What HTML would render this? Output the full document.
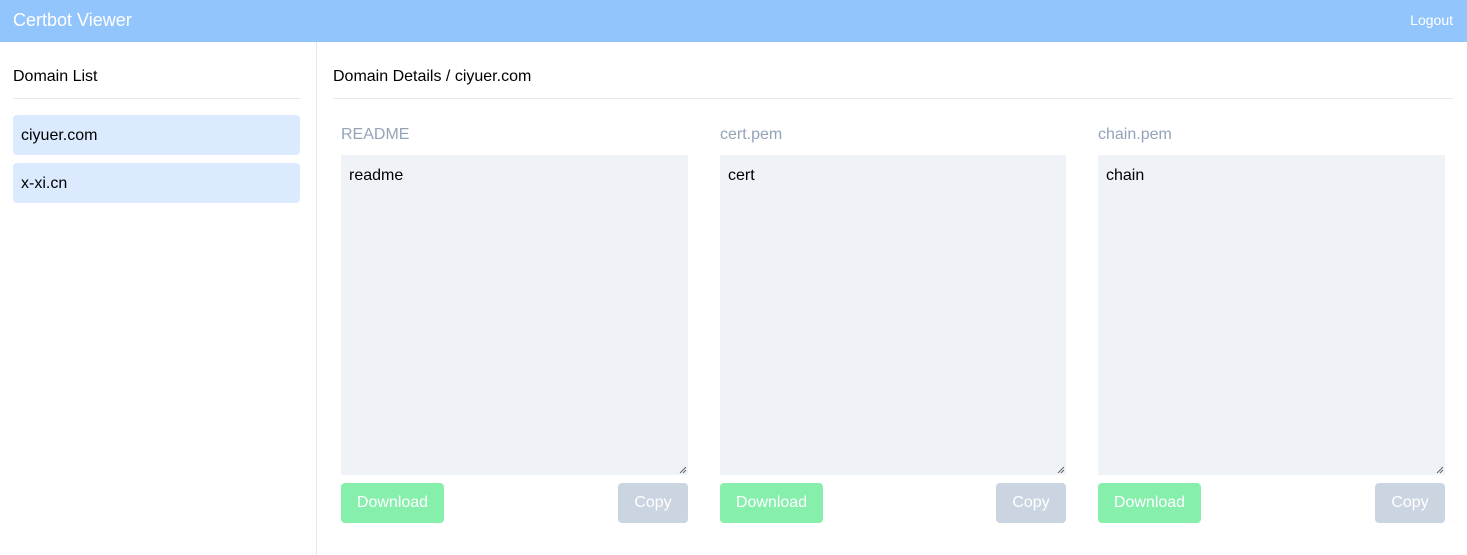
<!DOCTYPE html>
<html><head><meta charset="utf-8"><style>
*{box-sizing:border-box;margin:0;padding:0}
body{width:1467px;height:555px;overflow:hidden;font-family:"Liberation Sans",sans-serif;background:#fff;color:#000;position:relative}
.hdr{position:absolute;left:0;top:0;width:1467px;height:42px;background:#93c5fd;color:#fff}
.hdr .t{position:absolute;left:13px;top:10px;font-size:18px}
.hdr .l{position:absolute;right:14px;top:12px;font-size:14px}
.side{position:absolute;left:0;top:42px;width:317px;height:513px;border-right:1px solid #e5e7eb}
.h{position:absolute;font-size:16px;top:26px}
.hr{position:absolute;top:56px;height:1px;background:#e5e7eb}
.item{position:absolute;left:13px;width:287px;height:40px;background:#dbeafe;border-radius:4px;font-size:16px;padding:12px 8px}
.col{position:absolute;top:42px;width:347px}
.lab{position:absolute;top:84px;left:0;font-size:16px;color:#94a3b8}
.ta{position:absolute;top:113px;left:0;width:347px;height:320px;background:#eff3f8;font-size:16px;padding:12px 8px}
.ta svg{position:absolute;right:1px;bottom:1px}
.btn{position:absolute;top:441px;height:40px;border-radius:4px;color:#fff;font-size:16px;text-align:center;line-height:40px}
.dl{left:0;width:103px;background:#86efac}
.cp{right:0;width:70px;background:#cbd5e1}
</style></head><body>
<div class="hdr"><span class="t">Certbot Viewer</span><span class="l">Logout</span></div>
<div class="side">
<div class="h" style="left:13px">Domain List</div>
<div class="hr" style="left:13px;width:287px"></div>
<div class="item" style="top:73px">ciyuer.com</div>
<div class="item" style="top:121px">x-xi.cn</div>
</div>
<div class="h" style="left:333px;top:68px">Domain Details / ciyuer.com</div>
<div class="hr" style="left:333px;width:1120px;top:98px"></div>
<div class="col" style="left:341px"><div class="lab">README</div><div class="ta">readme<svg width="8" height="8"><path d="M1 7L7 1M4 7L7 4" stroke="#666" stroke-width="1"/></svg></div><div class="btn dl">Download</div><div class="btn cp">Copy</div></div>
<div class="col" style="left:720px;width:346px"><div class="lab">cert.pem</div><div class="ta" style="width:346px">cert<svg width="8" height="8"><path d="M1 7L7 1M4 7L7 4" stroke="#666" stroke-width="1"/></svg></div><div class="btn dl">Download</div><div class="btn cp">Copy</div></div>
<div class="col" style="left:1098px"><div class="lab">chain.pem</div><div class="ta">chain<svg width="8" height="8"><path d="M1 7L7 1M4 7L7 4" stroke="#666" stroke-width="1"/></svg></div><div class="btn dl">Download</div><div class="btn cp">Copy</div></div>
</body></html>
